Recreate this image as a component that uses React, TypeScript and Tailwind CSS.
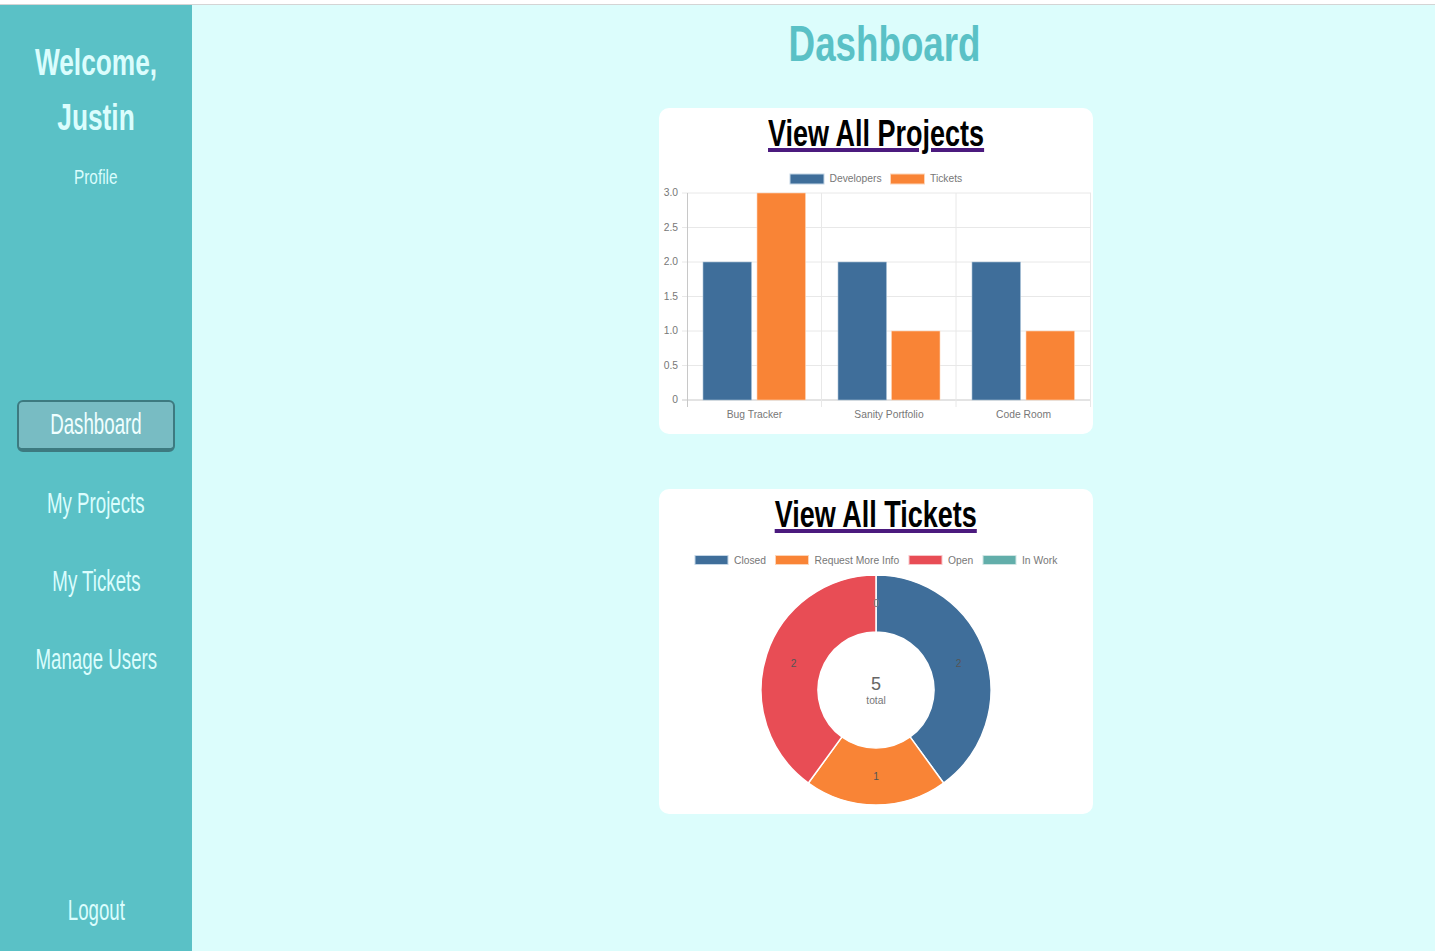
import React from "react";

const NAV = ["Dashboard", "My Projects", "My Tickets", "Manage Users"];
const TICK_TEXT = "font-['Liberation_Sans',Arial,sans-serif]";

function polar(r: number, deg: number) {
  const a = ((deg - 90) * Math.PI) / 180;
  return [876 + r * Math.cos(a), 690 + r * Math.sin(a)];
}

function slice(start: number, end: number) {
  const [x1, y1] = polar(115, start);
  const [x2, y2] = polar(115, end);
  const [x3, y3] = polar(58, end);
  const [x4, y4] = polar(58, start);
  const large = end - start > 180 ? 1 : 0;
  return `M${x1} ${y1}A115 115 0 ${large} 1 ${x2} ${y2}L${x3} ${y3}A58 58 0 ${large} 0 ${x4} ${y4}Z`;
}

const BarChart = () => {
  const rows = [
    { y: 193, label: "3.0" },
    { y: 227.5, label: "2.5" },
    { y: 262, label: "2.0" },
    { y: 296.5, label: "1.5" },
    { y: 331, label: "1.0" },
    { y: 365.5, label: "0.5" },
    { y: 400, label: "0" },
  ];
  const bars = [
    { x: 703, y: 262, c: "#3f6e9a" },
    { x: 757, y: 193, c: "#f98436" },
    { x: 838, y: 262, c: "#3f6e9a" },
    { x: 891.5, y: 331, c: "#f98436" },
    { x: 972, y: 262, c: "#3f6e9a" },
    { x: 1026, y: 331, c: "#f98436" },
  ];
  const labels = [
    { x: 754.5, t: "Bug Tracker" },
    { x: 889, t: "Sanity Portfolio" },
    { x: 1023.5, t: "Code Room" },
  ];
  return (
    <svg viewBox="659 164 434 270" className={`block w-[434px] h-[270px] ${TICK_TEXT}`}>
      <rect x="790" y="174" width="34" height="10" fill="#3f6e9a" stroke="#c4d6e6" strokeWidth="1" />
      <text x="829.5" y="182" fontSize="10.3" fill="#777">Developers</text>
      <rect x="890.5" y="174" width="34" height="10" fill="#f98436" stroke="#fdd5b8" strokeWidth="1" />
      <text x="930" y="182" fontSize="10.3" fill="#777">Tickets</text>
      {rows.map((r) => (
        <g key={r.label}>
          <line x1="682" x2="1091" y1={r.y} y2={r.y} stroke={r.label === "0" ? "#c8c8c8" : "#e8e8e8"} strokeWidth="1" />
          <text x="678" y={r.y + 3} textAnchor="end" fontSize="10.3" fill="#777">{r.label}</text>
        </g>
      ))}
      {[687.5, 821.5, 956, 1090.5].map((x, i) => (
        <line key={x} x1={x} x2={x} y1="193" y2="407" stroke={i === 0 ? "#c8c8c8" : "#e8e8e8"} strokeWidth="1" />
      ))}
      {bars.map((b) => (
        <rect key={b.x} x={b.x} y={b.y} width="48.5" height={400 - b.y} fill={b.c} stroke={b.c === "#3f6e9a" ? "#a9c1d8" : "#fdd5b8"} strokeWidth="0.6" />
      ))}
      {labels.map((l) => (
        <text key={l.t} x={l.x} y="418" textAnchor="middle" fontSize="10.3" fill="#777">{l.t}</text>
      ))}
    </svg>
  );
};

const DonutChart = () => {
  const legend = [
    { x: 695, w: 33, c: "#3f6e9a", s: "#c4d6e6", tx: 734, t: "Closed" },
    { x: 775.5, w: 33, c: "#f98436", s: "#fdd5b8", tx: 814.5, t: "Request More Info" },
    { x: 909, w: 33, c: "#e84d55", s: "#f8c6c9", tx: 948, t: "Open" },
    { x: 983, w: 33, c: "#62aeaa", s: "#cfe6e4", tx: 1022, t: "In Work" },
  ];
  return (
    <svg viewBox="659 545 434 269" className={`block w-[434px] h-[269px] ${TICK_TEXT}`}>
      {legend.map((l) => (
        <g key={l.t}>
          <rect x={l.x} y="555.5" width={l.w} height="9" fill={l.c} stroke={l.s} strokeWidth="1" />
          <text x={l.tx} y="563.5" fontSize="10.3" fill="#777">{l.t}</text>
        </g>
      ))}
      <path d={slice(0, 144)} fill="#3f6e9a" stroke="#fff" strokeWidth="1.5" />
      <path d={slice(144, 216)} fill="#f98436" stroke="#fff" strokeWidth="1.5" />
      <path d={slice(216, 360)} fill="#e84d55" stroke="#fff" strokeWidth="1.5" />
      <text x="876" y="607" textAnchor="middle" fontSize="10.3" fill="#777">0</text>
      <text x="958.5" y="666.5" textAnchor="middle" fontSize="10.3" fill="#555">2</text>
      <text x="793.5" y="666.5" textAnchor="middle" fontSize="10.3" fill="#555">2</text>
      <text x="876" y="780" textAnchor="middle" fontSize="10.3" fill="#555">1</text>
      <text x="876" y="690" textAnchor="middle" fontSize="18" fill="#666">5</text>
      <text x="876" y="704" textAnchor="middle" fontSize="10.3" fill="#777">total</text>
    </svg>
  );
};

const CardTitle = ({ children }: { children: React.ReactNode }) => (
  <div className="flex justify-center h-[56px] pt-[4px]">
    <a href="#" className="inline-block scale-x-[0.75] whitespace-nowrap font-bold text-[36px] leading-[44px] text-black underline decoration-[4px] decoration-[#4b1a7e] underline-offset-[2px]">
      {children}
    </a>
  </div>
);

export default function App() {
  return (
    <div className="flex flex-col h-[951px] w-[1435px] overflow-hidden bg-white font-['Liberation_Sans',Arial,sans-serif]">
      <div className="h-[5px] shrink-0 bg-white border-b border-[#d4d4d4]" />
      <div className="flex flex-1 min-h-0">
        <aside className="w-[192px] shrink-0 bg-[#5ac1c6] flex flex-col items-center text-[#dbfdfd]">
          <h2 className="mt-[30px] w-full text-center font-bold text-[36px] leading-[55px]">
            <span className="block scale-x-[0.73] whitespace-nowrap">Welcome,</span>
            <span className="block scale-x-[0.73] whitespace-nowrap">Justin</span>
          </h2>
          <a href="#" className="mt-[17px] text-[21px] leading-[30px] scale-x-[0.73] text-[#dbfdfd]">Profile</a>
          <nav className="mt-[208px] w-full flex flex-col items-center gap-[26px]">
            {NAV.map((item, i) => (
              <a
                key={item}
                href="#"
                className={`w-[158px] h-[52px] flex items-center justify-center text-[29px] ${
                  i === 0
                    ? "bg-[#78bcc3] border-2 border-b-4 border-[#3d7a80] rounded-[6px] text-[#f0ffff]"
                    : "text-[#dbfdfd]"
                }`}
              >
                <span className="block scale-x-[0.645] whitespace-nowrap">{item}</span>
              </a>
            ))}
          </nav>
          <a href="#" className="mt-auto mb-[14px] h-[52px] flex items-center text-[29px]">
            <span className="block scale-x-[0.645] whitespace-nowrap">Logout</span>
          </a>
        </aside>
        <main className="flex-1 bg-[#dcfdfc] pl-[125px] flex flex-col items-center">
          <h1 className="ml-[18px] mt-[9px] h-[94px] font-bold text-[50px] leading-[60px] text-[#5ac1c6] scale-x-[0.735] whitespace-nowrap">Dashboard</h1>
          <section className="w-[434px] h-[326px] bg-white rounded-[10px] overflow-hidden">
            <CardTitle>View All Projects</CardTitle>
            <BarChart />
          </section>
          <section className="mt-[55px] w-[434px] h-[325px] bg-white rounded-[10px] overflow-hidden">
            <CardTitle>View All Tickets</CardTitle>
            <DonutChart />
          </section>
        </main>
      </div>
    </div>
  );
}
